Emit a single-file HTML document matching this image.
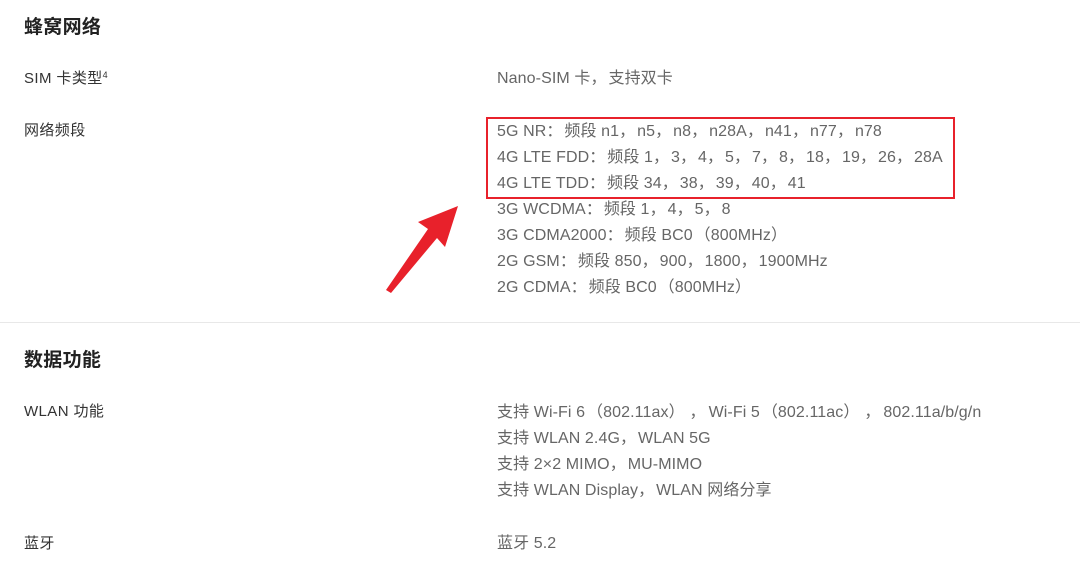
<!DOCTYPE html>
<html><head><meta charset="utf-8"><style>
body{margin:0;width:1080px;height:577px;background:#fff;position:relative;overflow:hidden;font-family:"Liberation Sans","Noto Sans CJK SC",sans-serif}
.a{position:absolute;white-space:nowrap}
.h{left:24px;font-size:19px;font-weight:bold;color:#222;line-height:26px;letter-spacing:0.3px}
.l{left:24px;font-size:15px;color:#333;line-height:26px;letter-spacing:0.4px}
.v{left:497px;font-size:16px;color:#666;line-height:26px;letter-spacing:0.1px}
.c{display:inline-block;width:18px;text-align:left}
.o{display:inline-block;width:18px;text-align:right}
.w{display:inline-block;width:22px;text-align:center}
sup{font-size:9px;vertical-align:top;position:relative;top:-4px}
</style></head><body>
<div class="a h" style="top:15px">蜂窝网络</div>
<div class="a l" style="top:66px">SIM 卡类型<sup>4</sup></div>
<div class="a v" style="top:66px">Nano-SIM 卡<span class="c">，</span>支持双卡</div>
<div class="a l" style="top:118px">网络频段</div>
<div class="a v" style="top:119px">5G NR<span class="c">：</span>频段 n1<span class="c">，</span>n5<span class="c">，</span>n8<span class="c">，</span>n28A<span class="c">，</span>n41<span class="c">，</span>n77<span class="c">，</span>n78<br>4G LTE FDD<span class="c">：</span>频段 1<span class="c">，</span>3<span class="c">，</span>4<span class="c">，</span>5<span class="c">，</span>7<span class="c">，</span>8<span class="c">，</span>18<span class="c">，</span>19<span class="c">，</span>26<span class="c">，</span>28A<br>4G LTE TDD<span class="c">：</span>频段 34<span class="c">，</span>38<span class="c">，</span>39<span class="c">，</span>40<span class="c">，</span>41<br>3G WCDMA<span class="c">：</span>频段 1<span class="c">，</span>4<span class="c">，</span>5<span class="c">，</span>8<br>3G CDMA2000<span class="c">：</span>频段 BC0<span class="o">（</span>800MHz<span class="c">）</span><br>2G GSM<span class="c">：</span>频段 850<span class="c">，</span>900<span class="c">，</span>1800<span class="c">，</span>1900MHz<br>2G CDMA<span class="c">：</span>频段 BC0<span class="o">（</span>800MHz<span class="c">）</span></div>
<div class="a" style="left:486px;top:117px;width:465px;height:78px;border:2px solid #e8212b"></div>
<svg class="a" style="left:0;top:0" width="1080" height="577"><polygon points="458,206 445,247 437,238 391,293 386,290 428,229 418,222" fill="#e8212b"/></svg>
<div class="a" style="left:0;top:322px;width:1080px;height:1px;background:#e8e8e8"></div>
<div class="a h" style="top:348px">数据功能</div>
<div class="a l" style="top:399px">WLAN 功能</div>
<div class="a v" style="top:400px">支持 Wi-Fi 6<span class="o">（</span>802.11ax<span class="c">）</span><span class="w">，</span>Wi-Fi 5<span class="o">（</span>802.11ac<span class="c">）</span><span class="w">，</span>802.11a/b/g/n<br>支持 WLAN 2.4G<span class="c">，</span>WLAN 5G<br>支持 2×2 MIMO<span class="c">，</span>MU-MIMO<br>支持 WLAN Display<span class="c">，</span>WLAN 网络分享</div>
<div class="a l" style="top:531px">蓝牙</div>
<div class="a v" style="top:531px">蓝牙 5.2</div>
</body></html>
